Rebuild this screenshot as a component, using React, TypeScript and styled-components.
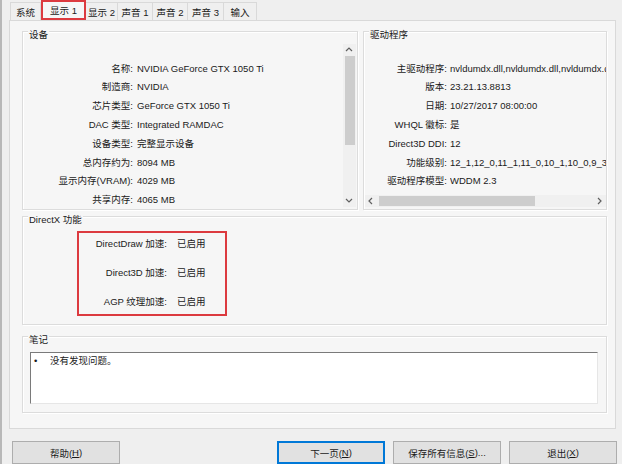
import React from "react";
import styled, { createGlobalStyle } from "styled-components";

const Global = createGlobalStyle`
  html, body { margin: 0; padding: 0; background: #efefef; }
  body {
    width: 622px; height: 464px; overflow: hidden;
    font-family: "Liberation Sans", "Noto Sans CJK SC", sans-serif;
    font-size: 9.5px; color: #1a1a1a;
  }
  #root { width: 622px; height: 464px; }
`;

const PANEL_BG = "#f6f6f6";
const RED = "#dc3a3f";

const Window = styled.div`
  box-sizing: border-box;
  width: 622px;
  height: 464px;
  border-left: 2px solid #b8b8b8;
  background: #efefef;
  display: flex;
  flex-direction: column;
  overflow: hidden;
`;

const TabStrip = styled.div`
  display: flex;
  align-items: flex-end;
  height: 20px;
  padding-left: 8px;
  position: relative;
  z-index: 1;
`;

const Tab = styled.div<{ $w: number; $active?: boolean; $first?: boolean }>`
  box-sizing: border-box;
  width: ${(p) => p.$w}px;
  height: ${(p) => (p.$active ? 20 : 18)}px;
  display: flex;
  align-items: center;
  justify-content: center;
  white-space: nowrap;
  background: ${(p) => (p.$active ? PANEL_BG : "#efefef")};
  border-top: 1px solid #d9d9d9;
  border-right: 1px solid #d9d9d9;
  border-left: ${(p) => (p.$first ? "1px solid #d9d9d9" : "none")};
  ${(p) => p.$active && `border: 2px solid ${RED};`}
`;

const Panel = styled.div`
  box-sizing: border-box;
  margin-left: 7px;
  width: 607px;
  height: 410px;
  border: 1px solid #d9d9d9;
  background: ${PANEL_BG};
  padding: 10px 8px 0 12px;
  display: flex;
  flex-direction: column;
`;

const TopRow = styled.div`
  display: flex;
  gap: 5px;
  height: 179px;
`;

const Group = styled.div<{ $w?: number; $h?: number; $mt?: number }>`
  position: relative;
  box-sizing: border-box;
  ${(p) => (p.$w ? `width: ${p.$w}px;` : "flex: 1;")}
  ${(p) => (p.$h ? `height: ${p.$h}px; flex: none;` : "")}
  margin-top: ${(p) => p.$mt ?? 0}px;
  border: 1px solid #dcdcdc;
  box-shadow: inset 1px 1px 0 #ffffff, 1px 1px 0 #ffffff;
  display: flex;
  flex-direction: column;
  min-width: 0;
`;

const Legend = styled.div`
  position: absolute;
  top: -3px;
  left: 5px;
  padding: 0 1px;
  line-height: 12px;
  background: ${PANEL_BG};
  white-space: nowrap;
`;

const ListArea = styled.div<{ $dir: "row" | "column" }>`
  margin-top: 12px;
  height: 163px;
  display: flex;
  flex-direction: ${(p) => p.$dir};
  min-width: 0;
  overflow: hidden;
`;

const InfoGrid = styled.div<{ $label: number; $gap: number }>`
  flex: 1;
  min-width: 0;
  padding-top: 15.6px;
  display: grid;
  grid-template-columns: ${(p) => p.$label}px 1fr;
  column-gap: ${(p) => p.$gap}px;
  grid-auto-rows: 18.8px;
  align-content: start;
  overflow: hidden;
`;

const Label = styled.div`
  text-align: right;
  white-space: nowrap;
  line-height: 18.8px;
`;

const Value = styled.div`
  white-space: nowrap;
  overflow: hidden;
  line-height: 18.8px;
`;

const VScroll = styled.div`
  width: 13px;
  margin-right: 1px;
  display: flex;
  flex-direction: column;
  background: #f0f0f0;
`;

const HScroll = styled.div`
  height: 12px;
  margin-left: 1px;
  display: flex;
  background: #f0f0f0;
`;

const Arrow = styled.div`
  flex: none;
  width: 12px;
  height: 12px;
  display: flex;
  align-items: center;
  justify-content: center;
`;

const VTrack = styled.div`
  flex: 1;
  display: flex;
  flex-direction: column;
  align-items: center;
`;

const VThumb = styled.div`
  width: 10px;
  background: #cdcdcd;
`;

const HTrack = styled.div`
  flex: 1;
  display: flex;
  align-items: center;
  padding-left: 2px;
`;

const HThumb = styled.div`
  height: 10px;
  background: #cdcdcd;
`;

const FeatureBox = styled.div`
  box-sizing: border-box;
  margin: 14px 0 0 54px;
  width: 150px;
  height: 85px;
  border: 2px solid ${RED};
  padding-top: 2px;
  display: grid;
  grid-template-columns: 88px 1fr;
  column-gap: 10px;
  grid-auto-rows: 18px;
  row-gap: 11px;
  align-content: start;
`;

const FeatureLabel = styled.div`
  text-align: right;
  white-space: nowrap;
  line-height: 18px;
`;

const FeatureValue = styled.div`
  white-space: nowrap;
  line-height: 18px;
`;

const NotesBox = styled.div`
  box-sizing: border-box;
  margin: 15px 8px 0 7px;
  height: 52px;
  background: #ffffff;
  border-top: 1px solid #7a7a7a;
  border-left: 1px solid #7a7a7a;
  border-right: 1px solid #e6e6e6;
  border-bottom: 1px solid #e6e6e6;
  padding: 1px 0 0 3px;
  display: flex;
  align-items: flex-start;
  line-height: 14px;
`;

const Bullet = styled.span`
  width: 16px;
  flex: none;
`;

const ButtonRow = styled.div`
  margin-top: 12px;
  padding: 0 5px 0 10px;
  display: flex;
  gap: 8px;
`;

const Spacer = styled.div`
  flex: 1;
`;

const Button = styled.div<{ $default?: boolean }>`
  box-sizing: border-box;
  width: 108px;
  height: 23px;
  flex: none;
  display: flex;
  align-items: center;
  justify-content: center;
  background: #e1e1e1;
  border: 1px solid ${(p) => (p.$default ? "#0078d7" : "#adadad")};
  ${(p) => p.$default && "box-shadow: inset 0 0 0 1px #0078d7;"}
  white-space: nowrap;
`;

type Dir = "up" | "down" | "left" | "right";
const pts: Record<Dir, string> = {
  up: "1,5 4,2 7,5",
  down: "1,2 4,5 7,2",
  left: "5,1 2,4 5,7",
  right: "2,1 5,4 2,7",
};

const Chevron = ({ dir }: { dir: Dir }) => (
  <svg width="8" height="8" viewBox="0 0 8 8">
    <polyline points={pts[dir]} fill="none" stroke="#606060" strokeWidth="1.2" />
  </svg>
);

const tabs = [
  { t: "系统", w: 31 },
  { t: "显示 1", w: 45, active: true },
  { t: "显示 2", w: 32 },
  { t: "声音 1", w: 35 },
  { t: "声音 2", w: 35 },
  { t: "声音 3", w: 36 },
  { t: "输入", w: 33 },
];

const device: [string, string][] = [
  ["名称:", "NVIDIA GeForce GTX 1050 Ti"],
  ["制造商:", "NVIDIA"],
  ["芯片类型:", "GeForce GTX 1050 Ti"],
  ["DAC 类型:", "Integrated RAMDAC"],
  ["设备类型:", "完整显示设备"],
  ["总内存约为:", "8094 MB"],
  ["显示内存(VRAM):", "4029 MB"],
  ["共享内存:", "4065 MB"],
];

const driver: [string, string][] = [
  ["主驱动程序:", "nvldumdx.dll,nvldumdx.dll,nvldumdx.dll,nvldumdd.dll"],
  ["版本:", "23.21.13.8813"],
  ["日期:", "10/27/2017 08:00:00"],
  ["WHQL 徽标:", "是"],
  ["Direct3D DDI:", "12"],
  ["功能级别:", "12_1,12_0,11_1,11_0,10_1,10_0,9_3,9_2,9_1"],
  ["驱动程序模型:", "WDDM 2.3"],
];

const features: [string, string][] = [
  ["DirectDraw 加速:", "已启用"],
  ["Direct3D 加速:", "已启用"],
  ["AGP 纹理加速:", "已启用"],
];

export default function App() {
  return (
    <>
      <Global />
      <Window>
        <TabStrip>
          {tabs.map((t, i) => (
            <Tab key={t.t} $w={t.w} $active={t.active} $first={i === 0}>
              {t.t}
            </Tab>
          ))}
        </TabStrip>
        <Panel>
          <TopRow>
            <Group $w={336}>
              <Legend>设备</Legend>
              <ListArea $dir="row">
                <InfoGrid $label={110} $gap={4}>
                  {device.map(([l, v]) => (
                    <React.Fragment key={l}>
                      <Label>{l}</Label>
                      <Value>{v}</Value>
                    </React.Fragment>
                  ))}
                </InfoGrid>
                <VScroll>
                  <Arrow>
                    <Chevron dir="up" />
                  </Arrow>
                  <VTrack>
                    <VThumb style={{ height: 89 }} />
                  </VTrack>
                  <Arrow>
                    <Chevron dir="down" />
                  </Arrow>
                </VScroll>
              </ListArea>
            </Group>
            <Group>
              <Legend>驱动程序</Legend>
              <ListArea $dir="column">
                <InfoGrid $label={83} $gap={3}>
                  {driver.map(([l, v]) => (
                    <React.Fragment key={l}>
                      <Label>{l}</Label>
                      <Value>{v}</Value>
                    </React.Fragment>
                  ))}
                </InfoGrid>
                <HScroll>
                  <Arrow>
                    <Chevron dir="left" />
                  </Arrow>
                  <HTrack>
                    <HThumb style={{ width: 156 }} />
                  </HTrack>
                  <Arrow>
                    <Chevron dir="right" />
                  </Arrow>
                </HScroll>
              </ListArea>
            </Group>
          </TopRow>
          <Group $h={109} $mt={6}>
            <Legend>DirectX 功能</Legend>
            <FeatureBox>
              {features.map(([l, v]) => (
                <React.Fragment key={l}>
                  <FeatureLabel>{l}</FeatureLabel>
                  <FeatureValue>{v}</FeatureValue>
                </React.Fragment>
              ))}
            </FeatureBox>
          </Group>
          <Group $h={77} $mt={11}>
            <Legend>笔记</Legend>
            <NotesBox>
              <Bullet>•</Bullet>
              <span>没有发现问题。</span>
            </NotesBox>
          </Group>
        </Panel>
        <ButtonRow>
          <Button>
            帮助(<u>H</u>)
          </Button>
          <Spacer />
          <Button $default>
            下一页(<u>N</u>)
          </Button>
          <Button>
            保存所有信息(<u>S</u>)...
          </Button>
          <Button>
            退出(<u>X</u>)
          </Button>
        </ButtonRow>
      </Window>
    </>
  );
}
